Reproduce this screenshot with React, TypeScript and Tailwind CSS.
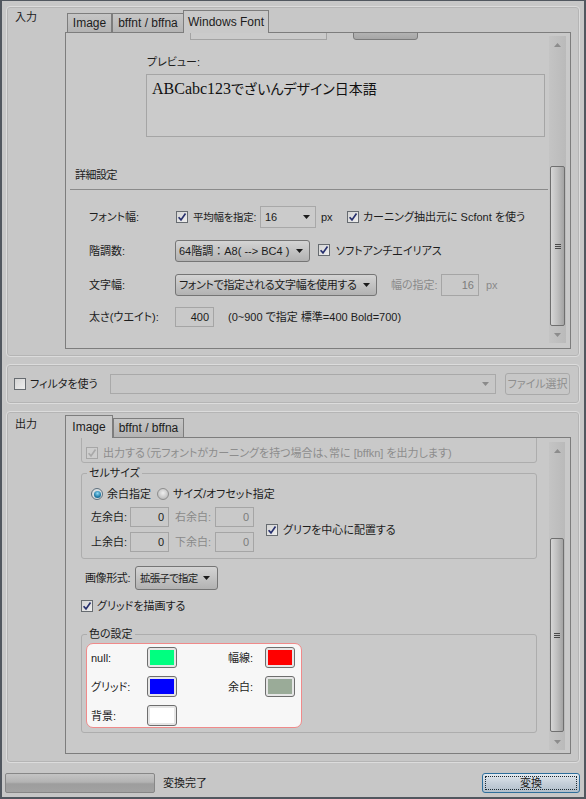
import React from "react";

const FONT = "font-['Liberation_Sans','Noto_Sans_CJK_JP',sans-serif] [font-feature-settings:'palt']";

function Check({ on = true, dis = false }: { on?: boolean; dis?: boolean }) {
  return (
    <span
      className={`inline-flex w-[12px] h-[12px] shrink-0 items-center justify-center border ${
        dis ? "border-[#a6a6a6] bg-[#cdcdcd]" : "border-[#666b70] bg-gradient-to-br from-[#d4d4d4] to-[#eeeeee]"
      }`}
    >
      {on && (
        <svg width="10" height="10" viewBox="0 0 10 10">
          <path d="M1.6 5.2 L4 7.9 L8.5 1.5" fill="none" stroke={dis ? "#a9a9a9" : "#27306e"} strokeWidth="1.7" />
        </svg>
      )}
    </span>
  );
}

function Radio({ on = false }: { on?: boolean }) {
  return (
    <span
      className={`inline-flex w-[12px] h-[12px] shrink-0 items-center justify-center rounded-full border ${
        on ? "border-[#5d6f7c] bg-[#d8dde0]" : "border-[#8d8d8d] bg-[radial-gradient(circle_at_50%_40%,#eeeeee,#c4c4c4_65%,#a9a9a9)]"
      }`}
    >
      {on && <span className="w-[7px] h-[7px] rounded-full bg-[radial-gradient(circle_at_50%_35%,#8fdaf5,#1f7aa6_60%,#175a7c)]" />}
    </span>
  );
}

function Arrow({ gray = false }: { gray?: boolean }) {
  return (
    <svg width="7" height="4" viewBox="0 0 7 4" className="shrink-0">
      <polygon points="0,0 7,0 3.5,4" fill={gray ? "#8a8a8a" : "#1b1b1b"} />
    </svg>
  );
}

function DropButton({ className, children }: { className: string; children: React.ReactNode }) {
  return (
    <div
      className={`flex items-center justify-between rounded-[3px] border border-[#757575] bg-gradient-to-b from-[#d4d4d4] to-[#b2b2b2] pl-[3px] pr-[6px] whitespace-nowrap ${className}`}
    >
      <span>{children}</span>
      <Arrow />
    </div>
  );
}

function TextBox({ className, value, dis = false }: { className: string; value: string; dis?: boolean }) {
  return (
    <div
      className={`flex items-center justify-end pr-[4px] border border-[#a5a5a5] bg-[#c9c9c9] ${
        dis ? "text-[#7c7c7c]" : ""
      } ${className}`}
    >
      {value}
    </div>
  );
}

function Group({ className, children }: { className: string; children?: React.ReactNode }) {
  return (
    <div className={`rounded-[4px] border border-[#dcdcdc] shadow-[inset_0_0_0_1px_#b5b5b5] ${className}`}>
      {children}
    </div>
  );
}

function Tab({ label, active, className }: { label: string; active?: boolean; className: string }) {
  return active ? (
    <div
      className={`relative z-10 -mb-px h-[23px] flex items-center justify-center border border-b-0 border-[#7d7d7d] bg-[#c9c9c9] text-[12px] ${className}`}
    >
      {label}
    </div>
  ) : (
    <div
      className={`h-[19px] flex items-center justify-center border border-b-0 border-[#7d7d7d] bg-gradient-to-b from-[#c6c6c6] to-[#b4b4b4] text-[12px] ${className}`}
    >
      {label}
    </div>
  );
}

function ScrollBar({ className, spacer, thumb }: { className: string; spacer: string; thumb: string }) {
  return (
    <div className={`flex flex-col shrink-0 bg-[linear-gradient(to_right,#c4c4c4,#bababa)] ${className}`}>
      <div className="h-[17px] flex items-center justify-center">
        <svg width="7" height="4" viewBox="0 0 7 4">
          <polygon points="0,4 7,4 3.5,0" fill="#8c8c8c" />
        </svg>
      </div>
      <div className={spacer} />
      <div
        className={`${thumb} mx-[1px] rounded-[2px] border border-[#6f6f6f] bg-gradient-to-r from-[#d6d6d6] via-[#bfbfbf] to-[#a3a3a3] flex flex-col items-center justify-center gap-[1px]`}
      >
        <span className="w-[6px] h-px bg-[#4a4a4a]" />
        <span className="w-[6px] h-px bg-[#4a4a4a]" />
        <span className="w-[6px] h-px bg-[#4a4a4a]" />
      </div>
      <div className="flex-1" />
      <div className="h-[17px] flex items-center justify-center">
        <svg width="7" height="4" viewBox="0 0 7 4">
          <polygon points="0,0 7,0 3.5,4" fill="#8c8c8c" />
        </svg>
      </div>
    </div>
  );
}

function Swatch({ color }: { color: string }) {
  return (
    <div className="w-[30px] h-[21px] rounded-[3px] border border-[#6e6e6e] bg-[#e6e6e6] p-[2px]">
      <div className={`w-full h-full ${color}`} />
    </div>
  );
}

function WindowsFontTab() {
  return (
    <div className="w-[482px] h-full overflow-hidden flex flex-col">
      {/* controls scrolled out above */}
      <div className="flex h-[22px] mt-[-15px] shrink-0">
        <div className="ml-[124px] w-[137px] h-[22px] border border-[#a3a3a3] bg-[#cbcbcb]" />
        <div className="ml-[26px] w-[65px] h-[22px] rounded-[3px] border border-[#7a7a7a] bg-gradient-to-b from-[#d0d0d0] to-[#a6a6a6]" />
      </div>
      <div className="ml-[81px] mt-[15px] shrink-0">プレビュー:</div>
      <div className="ml-[80px] mt-[5px] w-[399px] h-[63px] shrink-0 border border-[#a5a5a5] bg-[#cbcbcb] pl-[5px] pt-[3px] text-[16px] leading-[20px] text-[#111] font-['Liberation_Serif',serif]">
        ABCabc123
        <span className="text-[14px] font-['Noto_Sans_CJK_JP',sans-serif]">でざいんデザイン日本語</span>
      </div>
      <div className="ml-[9px] mt-[31px] shrink-0 tracking-[-0.5px]">詳細設定</div>
      <div className="ml-[4px] mt-[7px] h-px shrink-0 bg-[#8a8a8a]" />

      <div className="flex items-center h-[22px] pl-[23px] mt-[16px] shrink-0 whitespace-nowrap">
        <span className="w-[86px]">フォント幅:</span>
        <div className="w-[85px] flex items-center gap-[5px] pl-[1px] text-[10.5px] tracking-[-0.3px]">
          <Check />
          平均幅を指定:
        </div>
        <div className="w-[56px] h-[22px] flex items-center justify-between pl-[4px] pr-[5px] border border-[#a8a8a8] bg-[#cbcbcb]">
          16
          <Arrow />
        </div>
        <span className="w-[31px] pl-[5px]">px</span>
        <Check />
        <span className="ml-[4px]">カーニング抽出元に Scfont を使う</span>
      </div>

      <div className="flex items-center h-[22px] pl-[23px] mt-[12px] shrink-0 whitespace-nowrap">
        <span className="w-[86px]">階調数:</span>
        <DropButton className="w-[135px] h-[22px]">
          64階調<span className="[font-feature-settings:normal]">：</span>A8( --&gt; BC4 )
        </DropButton>
        <span className="ml-[8px]">
          <Check />
        </span>
        <span className="ml-[6px]">ソフトアンチエイリアス</span>
      </div>

      <div className="flex items-center h-[22px] pl-[23px] mt-[12px] shrink-0 whitespace-nowrap">
        <span className="w-[86px]">文字幅:</span>
        <DropButton className="w-[202px] h-[22px] tracking-[-0.35px]">フォントで指定される文字幅を使用する</DropButton>
        <span className="ml-[14px] w-[50px] text-[#8a8a8a]">幅の指定:</span>
        <TextBox className="w-[38px] h-[22px]" value="16" dis />
        <span className="ml-[7px] text-[#8a8a8a]">px</span>
      </div>

      <div className="flex items-center h-[20px] pl-[23px] mt-[11px] shrink-0 whitespace-nowrap">
        <span className="w-[86px]">太さ(ウエイト):</span>
        <TextBox className="w-[39px] h-[20px]" value="400" />
        <span className="ml-[14px]">(0~900 で指定 標準=400 Bold=700)</span>
      </div>
    </div>
  );
}

function ImageTab() {
  return (
    <div className="w-[483px] h-full overflow-hidden flex flex-col whitespace-nowrap">
      <div className="ml-[15px] w-[456px] h-[33px] mt-[-8px] shrink-0 rounded-[3px] border border-[#adadad] flex items-center pt-[12px] pl-[4px] text-[#8d8d8d]">
        <Check dis />
        <span className="ml-[5px]">出力する（元フォントがカーニングを持つ場合は、常に [bffkn] を出力します)</span>
      </div>

      <fieldset className="ml-[15px] w-[456px] mt-[3px] shrink-0 rounded-[3px] border border-[#adadad]">
        <legend className="ml-[5px] px-[2px]">セルサイズ</legend>
        <div className="pl-[9px] pt-[7px] pb-[6px]">
          <div className="flex items-center h-[14px]">
            <div className="w-[66px] flex items-center gap-[4px]">
              <Radio on />
              余白指定
            </div>
            <div className="flex items-center gap-[4px]">
              <Radio />
              サイズ/オフセット指定
            </div>
          </div>
          <div className="flex items-center mt-[6px]">
            <div className="flex flex-col gap-[5px]">
              <div className="flex items-center h-[20px]">
                <span className="w-[39px]">左余白:</span>
                <TextBox className="w-[39px] h-[20px]" value="0" />
                <span className="ml-[6px] w-[40px] text-[#8a8a8a]">右余白:</span>
                <TextBox className="w-[39px] h-[20px]" value="0" dis />
              </div>
              <div className="flex items-center h-[20px]">
                <span className="w-[39px]">上余白:</span>
                <TextBox className="w-[39px] h-[20px]" value="0" />
                <span className="ml-[6px] w-[40px] text-[#8a8a8a]">下余白:</span>
                <TextBox className="w-[39px] h-[20px]" value="0" dis />
              </div>
            </div>
            <div className="ml-[12px] flex items-center gap-[5px]">
              <Check />
              グリフを中心に配置する
            </div>
          </div>
        </div>
      </fieldset>

      <div className="flex items-center mt-[7px] h-[24px] pl-[19px] shrink-0">
        <span className="w-[50px] tracking-[-0.4px]">画像形式:</span>
        <DropButton className="w-[83px] h-[24px] pl-[4px] pr-[7px] text-[10.5px] tracking-[-0.8px]">拡張子で指定</DropButton>
      </div>

      <div className="flex items-center gap-[4px] mt-[9px] h-[14px] pl-[15px] shrink-0">
        <Check />
        グリッドを描画する
      </div>

      <fieldset className="ml-[15px] w-[456px] mt-[14px] shrink-0 rounded-[3px] border border-[#adadad]">
        <legend className="ml-[5px] px-[2px]">色の設定</legend>
        <div className="pl-[4px] pt-[2px] pb-[4px]">
          <div className="w-[216px] h-[85px] rounded-[7px] border border-[#f08a8a] bg-[#f7f7f7] pl-[4px] pt-[3px]">
            <div className="grid grid-cols-[56px_30px_51px_37px_30px] gap-y-[8px] items-center">
              <span>null:</span>
              <Swatch color="bg-[#00ff80]" />
              <span />
              <span>幅線:</span>
              <Swatch color="bg-[#ff0000]" />
              <span>グリッド:</span>
              <Swatch color="bg-[#0000ff]" />
              <span />
              <span>余白:</span>
              <Swatch color="bg-[#9aab98]" />
              <span>背景:</span>
              <Swatch color="bg-[#ffffff]" />
            </div>
          </div>
        </div>
      </fieldset>
    </div>
  );
}

export default function App() {
  return (
    <div
      className={`w-[586px] h-[799px] overflow-hidden bg-[#c7c7c7] border-x-2 border-t border-b-2 border-[#51575f] px-[4px] text-[11px] leading-[14px] text-[#1c1c1c] ${FONT}`}
    >
      {/* 入力 */}
      <Group className="mt-[5px] h-[351px] flex">
        <div className="w-[58px] shrink-0 pl-[8px] pt-[3px]">入力</div>
        <div className="w-[506px] shrink-0 pt-[3px] flex flex-col">
          <div className="flex items-end h-[22px] pl-[2px]">
            <Tab label="Image" className="w-[45px]" />
            <Tab label="bffnt / bffna" className="w-[72px]" />
            <Tab label="Windows Font" active className="w-[86px] -ml-px" />
          </div>
          <div className="h-[317px] border border-[#7d7d7d] bg-[#c9c9c9] flex">
            <WindowsFontTab />
            <div className="ml-px pt-[3px] pb-[5px] pr-[3px] h-full">
              <ScrollBar className="w-[17px] h-full" spacer="h-[113px]" thumb="h-[160px]" />
            </div>
          </div>
        </div>
      </Group>

      {/* フィルタ */}
      <Group className="mt-[7px] h-[40px] flex items-center pl-[7px] whitespace-nowrap">
        <div className="w-[96px] flex items-center gap-[4px]">
          <Check on={false} />
          フィルタを使う
        </div>
        <div className="w-[386px] h-[20px] border border-[#a9a9a9] flex items-center justify-end pr-[6px]">
          <Arrow gray />
        </div>
        <div className="ml-[9px] w-[65px] h-[22px] rounded-[3px] border border-[#a9a9a9] flex items-center justify-center text-[#8e8e8e]">
          ファイル選択
        </div>
      </Group>

      {/* 出力 */}
      <Group className="mt-[7px] h-[352px] flex">
        <div className="w-[58px] shrink-0 pl-[8px] pt-[5px]">出力</div>
        <div className="w-[506px] shrink-0 pt-[3px] flex flex-col">
          <div className="flex items-end h-[22px]">
            <Tab label="Image" active className="w-[48px]" />
            <Tab label="bffnt / bffna" className="w-[71px]" />
          </div>
          <div className="h-[317px] border border-[#7d7d7d] bg-[#c9c9c9] flex">
            <ImageTab />
            <div className="pt-[4px] pb-[3px] pr-[5px] h-full">
              <ScrollBar className="w-[16px] h-full" spacer="h-[79px]" thumb="h-[194px]" />
            </div>
          </div>
        </div>
      </Group>

      {/* status */}
      <div className="mt-[10px] h-[20px] flex items-center whitespace-nowrap">
        <div className="-ml-px w-[150px] h-[20px] rounded-[2px] border border-[#878787] bg-[linear-gradient(to_bottom,#c4c4c4,#b3b3b3_45%,#9d9d9d_55%,#a2a2a2)]" />
        <span className="ml-[8px]">変換完了</span>
        <div className="ml-auto w-[98px] h-[20px] rounded-[3px] border border-[#2f6f9c] bg-gradient-to-b from-[#e3eaf0] via-[#c6d0da] to-[#b2bfcb] p-[2px]">
          <div className="w-full h-full border border-dotted border-[#1d2a33] flex items-center justify-center">変換</div>
        </div>
      </div>
    </div>
  );
}
